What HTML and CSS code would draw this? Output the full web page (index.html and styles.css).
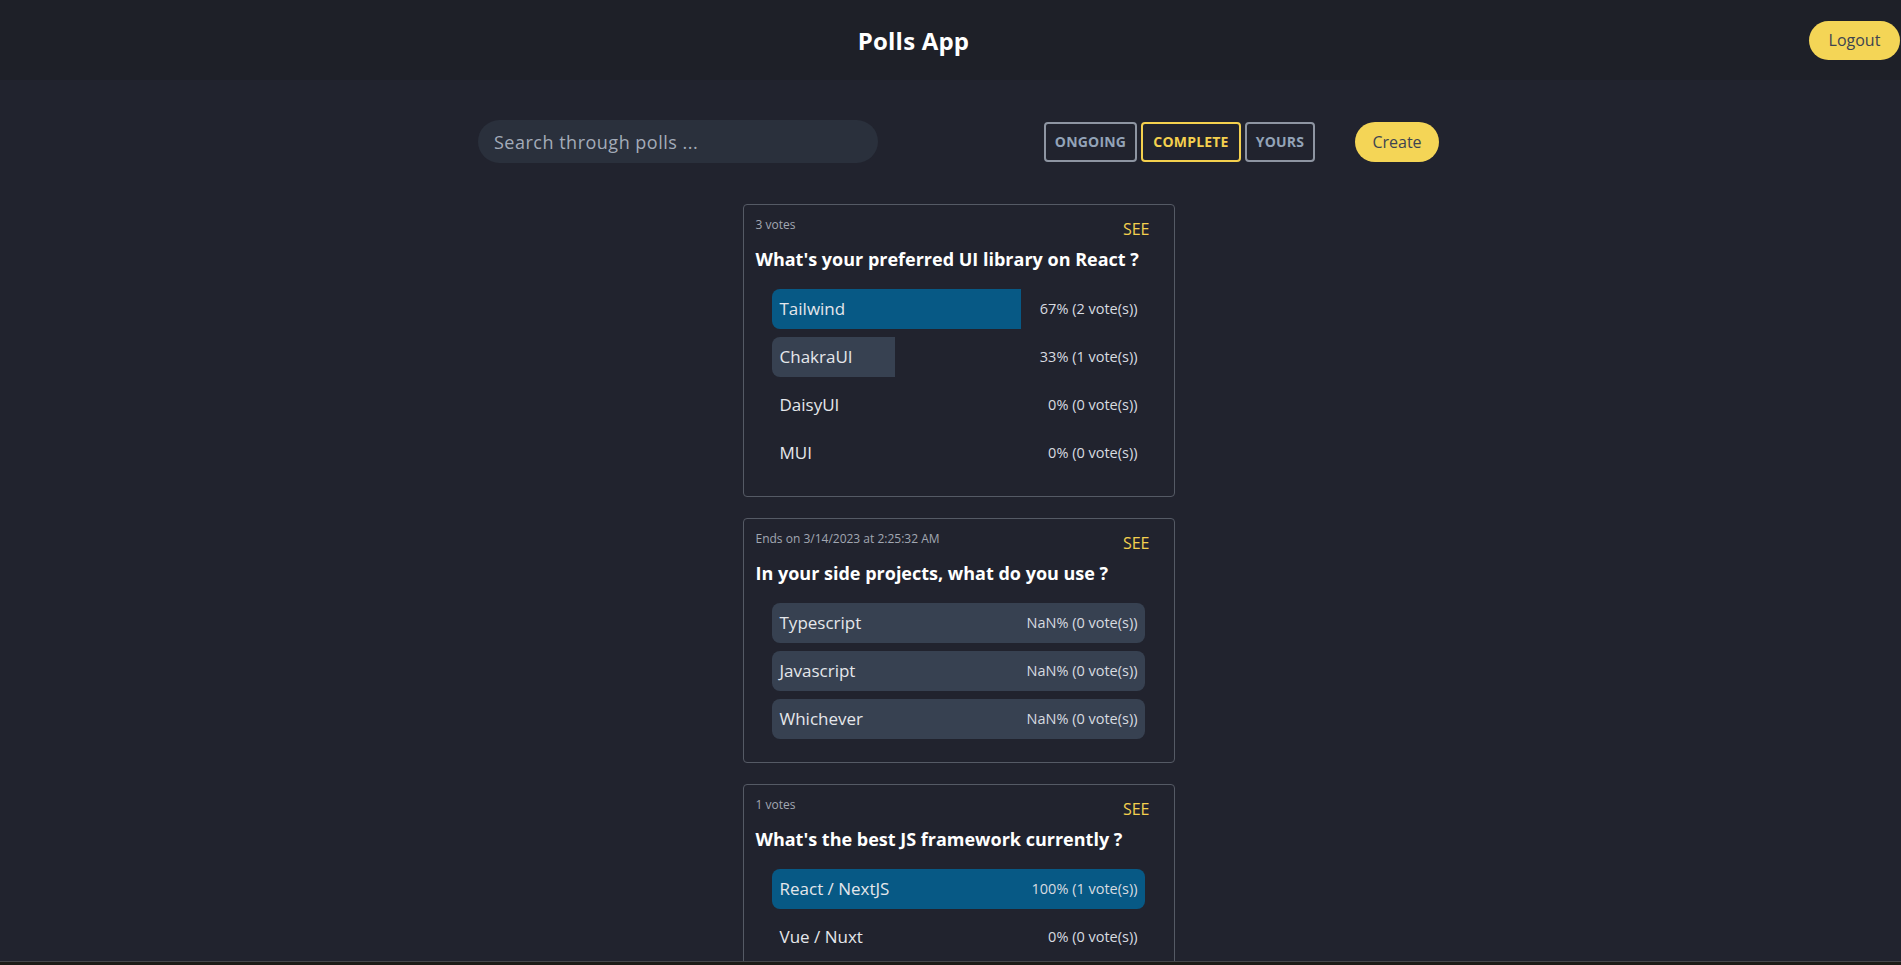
FILE: index.html
```html
<!DOCTYPE html>
<html lang="en">
<head>
<meta charset="utf-8">
<title>Polls App</title>
<link rel="stylesheet" href="styles.css">
</head>
<body>
<header class="topbar">
  <span class="topbar-spacer"></span>
  <h1 class="brand">Polls App</h1>
  <button class="pill-btn logout">Logout</button>
</header>
<main class="main">
  <div class="toolbar">
    <input class="search" type="text" placeholder="Search through polls ...">
    <div class="filters">
      <button class="filter">ONGOING</button>
      <button class="filter active">COMPLETE</button>
      <button class="filter">YOURS</button>
    </div>
    <button class="pill-btn create">Create</button>
  </div>

  <section class="polls">
    <article class="card">
      <div class="card-meta">
        <span class="meta-text">3 votes</span>
        <span class="see">SEE</span>
      </div>
      <h2 class="question">What's your preferred UI library on React ?</h2>
      <ul class="options">
        <li class="option"><span class="fill fill-blue partial" style="width:67%"></span><span class="opt-label">Tailwind</span><span class="opt-pct">67% (2 vote(s))</span></li>
        <li class="option"><span class="fill fill-gray partial" style="width:33%"></span><span class="opt-label">ChakraUI</span><span class="opt-pct">33% (1 vote(s))</span></li>
        <li class="option"><span class="opt-label">DaisyUI</span><span class="opt-pct">0% (0 vote(s))</span></li>
        <li class="option"><span class="opt-label">MUI</span><span class="opt-pct">0% (0 vote(s))</span></li>
      </ul>
    </article>

    <article class="card">
      <div class="card-meta">
        <span class="meta-text">Ends on 3/14/2023 at 2:25:32 AM</span>
        <span class="see">SEE</span>
      </div>
      <h2 class="question">In your side projects, what do you use ?</h2>
      <ul class="options">
        <li class="option"><span class="fill fill-gray" style="width:100%"></span><span class="opt-label">Typescript</span><span class="opt-pct">NaN% (0 vote(s))</span></li>
        <li class="option"><span class="fill fill-gray" style="width:100%"></span><span class="opt-label">Javascript</span><span class="opt-pct">NaN% (0 vote(s))</span></li>
        <li class="option"><span class="fill fill-gray" style="width:100%"></span><span class="opt-label">Whichever</span><span class="opt-pct">NaN% (0 vote(s))</span></li>
      </ul>
    </article>

    <article class="card">
      <div class="card-meta">
        <span class="meta-text">1 votes</span>
        <span class="see">SEE</span>
      </div>
      <h2 class="question">What's the best JS framework currently ?</h2>
      <ul class="options">
        <li class="option"><span class="fill fill-blue" style="width:100%"></span><span class="opt-label">React / NextJS</span><span class="opt-pct">100% (1 vote(s))</span></li>
        <li class="option"><span class="opt-label">Vue / Nuxt</span><span class="opt-pct">0% (0 vote(s))</span></li>
      </ul>
    </article>
  </section>
</main>
<div class="screen-edge"></div>
</body>
</html>
```

FILE: styles.css
```css
* { box-sizing: border-box; }

html, body {
  margin: 0;
  padding: 0;
  background: #21232e;
  color: #e5e7eb;
  font-family: "Open Sans", "Noto Sans", sans-serif;
}

button, input {
  font-family: inherit;
}

.topbar {
  height: 80px;
  background: #1e2028;
  display: flex;
  align-items: center;
  justify-content: space-between;
  padding: 0 1px 0 18px;
}

.topbar-spacer { width: 0; }

.brand {
  margin: 0;
  font-size: 24px;
  font-weight: 700;
  color: #ffffff;
  letter-spacing: 0.2px;
}

.pill-btn {
  border: none;
  background: #f4d556;
  color: #3d4451;
  font-size: 16px;
  border-radius: 999px;
  height: 39px;
  padding: 0 16px;
  cursor: pointer;
}

.logout { width: 91px; }

.main {
  padding: 40px 0 40px 16px;
}

.toolbar {
  width: 961px;
  margin: 0 auto;
  display: flex;
  align-items: center;
}

.search {
  width: 400px;
  height: 43px;
  border: none;
  border-radius: 22px;
  background: #2a303c;
  color: #c6ccd6;
  font-size: 18px;
  letter-spacing: 0.5px;
  padding: 0 16px;
  outline: none;
}
.search::placeholder { color: #a3abb8; }

.filters {
  margin-left: 166px;
  display: flex;
  gap: 4px;
}

.filter {
  height: 40px;
  background: transparent;
  border: 2px solid #8e95a2;
  border-radius: 4px;
  color: #93a3b8;
  font-size: 14px;
  font-weight: 700;
  letter-spacing: 0.2px;
  padding: 0;
  cursor: pointer;
}
.filter:nth-child(1) { width: 93px; }
.filter:nth-child(2) { width: 100px; }
.filter:nth-child(3) { width: 70px; }
.filter.active {
  border-color: #f4d04e;
  color: #f4d04e;
}

.create {
  margin-left: 40px;
  width: 84px;
  height: 40px;
}

.polls {
  width: 432px;
  margin: 41px auto 0;
  display: flex;
  flex-direction: column;
  gap: 21px;
}

.card {
  border: 1px solid #555a65;
  border-radius: 4px;
  padding: 12px 24px 23px 12px;
}

.card-meta {
  display: flex;
  justify-content: space-between;
  align-items: flex-start;
  height: 24px;
}

.meta-text {
  font-size: 12px;
  line-height: 16px;
  color: #a1a7b2;
}

.see {
  font-size: 16px;
  line-height: 24px;
  color: #f4d04e;
  cursor: pointer;
}

.question {
  margin: 4px 0 0;
  font-size: 18px;
  line-height: 28px;
  font-weight: 700;
  color: #ffffff;
  white-space: nowrap;
}

.options {
  list-style: none;
  margin: 16px 5px 0 16px;
  padding: 0;
  display: flex;
  flex-direction: column;
  gap: 8px;
}

.option {
  position: relative;
  height: 40px;
  display: flex;
  align-items: center;
  justify-content: space-between;
  padding: 0 7px 0 8px;
}

.fill {
  position: absolute;
  left: 0;
  top: 0;
  bottom: 0;
  border-radius: 8px;
}
.fill.partial { border-radius: 8px 0 0 8px; }
.fill-blue { background: #075985; }
.fill-gray { background: #374151; }

.opt-label {
  position: relative;
  font-size: 17px;
  line-height: 24px;
  color: #e5e7eb;
}

.opt-pct {
  position: relative;
  font-size: 14.5px;
  line-height: 24px;
  color: #d8dbe0;
}

.screen-edge {
  position: fixed;
  left: 0;
  right: 0;
  bottom: 0;
  height: 4px;
  background: #1c1b17;
  border-top: 1px solid #45464a;
}
```
